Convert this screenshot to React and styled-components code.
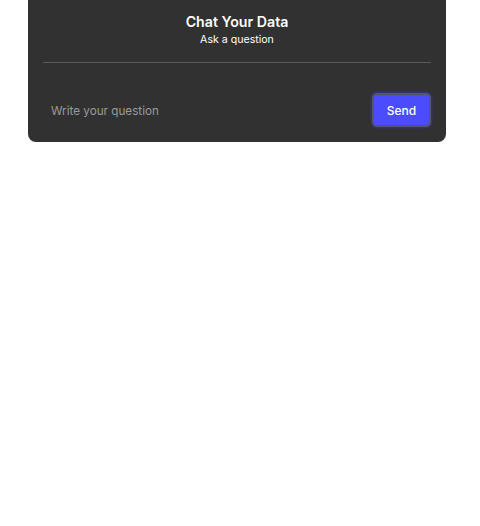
import styled, { createGlobalStyle } from "styled-components";

const GlobalStyle = createGlobalStyle`
  body {
    margin: 0;
    background: #ffffff;
    font-family: Inter, "Noto Sans", sans-serif;
  }
`;

const Card = styled.div`
  width: 418px;
  margin: -20px 0 0 28px;
  padding: 32px 15px 15px;
  box-sizing: border-box;
  background: #313131;
  border-radius: 8px;
  color: #ffffff;
`;

const Header = styled.div`
  display: flex;
  flex-direction: column;
  align-items: center;
  padding-bottom: 15px;
  border-bottom: 1px solid #5c5c5c;
`;

const Title = styled.h1`
  margin: 0;
  font-size: 14.2px;
  line-height: 19px;
  font-weight: 600;
`;

const Subtitle = styled.p`
  margin: 2px 0 0;
  font-size: 10.6px;
  line-height: 14px;
  font-weight: 400;
`;

const Form = styled.form`
  display: flex;
  align-items: center;
  gap: 10px;
  margin-top: 30px;
`;

const Input = styled.input`
  flex: 1;
  height: 34px;
  padding: 2px 8px 0;
  box-sizing: border-box;
  border: none;
  outline: none;
  background: transparent;
  color: #ffffff;
  font-family: inherit;
  font-size: 11.7px;

  &::placeholder {
    color: #9a9a9a;
  }
`;

const SendButton = styled.button`
  width: 59px;
  height: 34px;
  border: 2px solid #55556a;
  border-radius: 5px;
  background: #4c4cff;
  box-shadow: 0 0 3px #3a3aff;
  color: #ffffff;
  font-family: inherit;
  font-size: 12px;
  font-weight: 500;
  cursor: pointer;
`;

const App = () => {
  return (
    <>
      <GlobalStyle />
      <Card>
        <Header>
          <Title>Chat Your Data</Title>
          <Subtitle>Ask a question</Subtitle>
        </Header>
        <Form onSubmit={(e) => e.preventDefault()}>
          <Input placeholder="Write your question" />
          <SendButton type="submit">Send</SendButton>
        </Form>
      </Card>
    </>
  );
};

export default App;
